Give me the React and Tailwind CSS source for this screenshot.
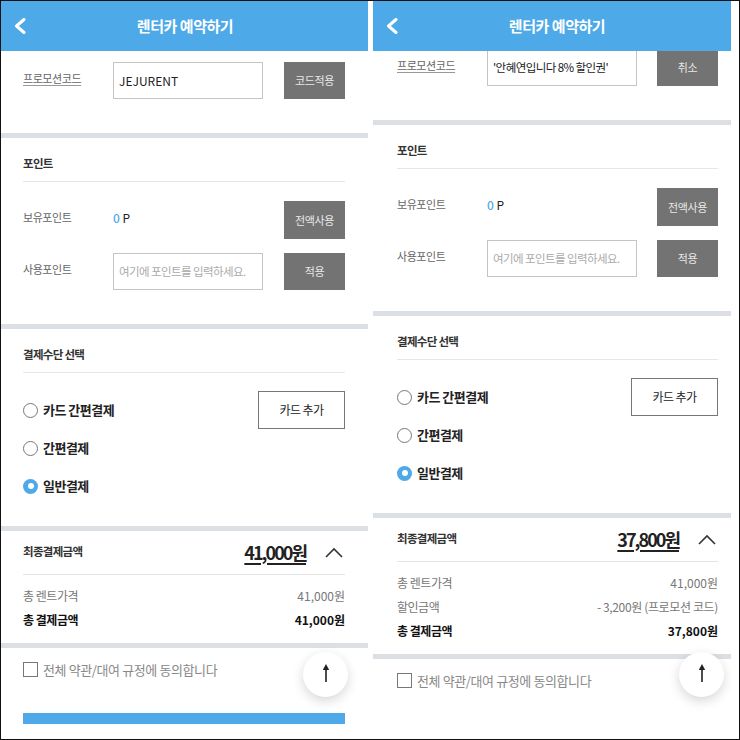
import React from "react";

function BackIcon() {
  return (
    <svg width="12" height="16" viewBox="0 0 12 16" className="ml-[13px] shrink-0">
      <polyline points="10,1.5 2.5,8 10,14.5" fill="none" stroke="white" strokeWidth="3" strokeLinecap="round" strokeLinejoin="round" />
    </svg>
  );
}

function Header() {
  return (
    <div className="h-[50px] w-[367px] shrink-0 bg-[#4DA9E7] flex items-center">
      <BackIcon />
      <div className="flex-1 text-center text-[15px] font-bold tracking-[-0.03em] text-white">렌터카 예약하기</div>
      <div className="w-[24px] shrink-0" />
    </div>
  );
}

function Band() {
  return <div className="h-[5px] bg-[#dcdfe3]" />;
}

function GreyBtn({ children }) {
  return (
    <div className="w-[61px] h-full shrink-0 bg-[#737373] flex items-center justify-center text-[11px] tracking-[-0.03em] text-[#e8e8e8]">
      {children}
    </div>
  );
}

function Radio({ checked, label }) {
  return (
    <div className="flex items-center gap-[5px]">
      {checked ? (
        <div className="w-[15px] h-[15px] rounded-full bg-[#4DA9E7] flex items-center justify-center">
          <div className="w-[6px] h-[6px] rounded-full bg-white" />
        </div>
      ) : (
        <div className="w-[15px] h-[15px] rounded-full border-[1.5px] border-[#777]" />
      )}
      <span className="text-[13px] font-semibold tracking-[-0.04em] text-[#222]">{label}</span>
    </div>
  );
}

function Content({ right }) {
  const pad = right ? "pl-[24px] pr-[22px]" : "pl-[22px] pr-[23px]";
  const total = right ? "37,800원" : "41,000원";
  return (
    <div className="flex flex-col">
      {/* promo */}
      <div className={"pt-[11px] pb-[34px] " + pad}>
        <div className="flex items-center h-[37px]">
          <div className="w-[90px] shrink-0 pb-[5px] text-[11px] tracking-[-0.04em] text-[#666] underline underline-offset-2 decoration-[#999]">프로모션코드</div>
          <div className="w-[150px] h-full shrink-0 border border-[#c4c4c4] flex items-center px-[5px] text-[12px] text-[#222]">
            {right ? <span className="text-[11.5px] tracking-[-0.05em]">'안혜연입니다 8% 할인권'</span> : "JEJURENT"}
          </div>
          <div className="flex-1" />
          <GreyBtn>{right ? "취소" : "코드적용"}</GreyBtn>
        </div>
      </div>
      <Band />
      {/* points */}
      <div className={"pt-[18px] pb-[34px] " + pad}>
        <div className="h-[16px] flex items-center text-[11.5px] font-bold tracking-[-0.06em] text-[#333]">포인트</div>
        <div className="mt-[9px] h-px bg-[#e6e6e6]" />
        <div className="mt-[19px] flex items-center h-[38px]">
          <div className="w-[90px] shrink-0 pb-[5px] text-[11px] tracking-[-0.04em] text-[#666]">보유포인트</div>
          <div className="pb-[5px] text-[12px] text-[#222]">
            <span className="text-[#4DA9E7] font-medium">0</span> P
          </div>
          <div className="flex-1" />
          <GreyBtn>전액사용</GreyBtn>
        </div>
        <div className="mt-[14px] flex items-center h-[37px]">
          <div className="w-[90px] shrink-0 pb-[5px] text-[11px] tracking-[-0.04em] text-[#666]">사용포인트</div>
          <div className="w-[150px] h-full shrink-0 border border-[#c4c4c4] flex items-center px-[5px] text-[11.5px] tracking-[-0.05em] text-[#aaa]">
            여기에 포인트를 입력하세요.
          </div>
          <div className="flex-1" />
          <GreyBtn>적용</GreyBtn>
        </div>
      </div>
      <Band />
      {/* payment */}
      <div className={"pt-[18px] pb-[21px] " + pad}>
        <div className="h-[16px] flex items-center text-[11.5px] font-bold tracking-[-0.06em] text-[#333]">결제수단 선택</div>
        <div className="mt-[9px] h-px bg-[#e6e6e6]" />
        <div className="mt-[18px] flex items-center h-[38px]">
          <Radio label="카드 간편결제" />
          <div className="flex-1" />
          <div className="w-[87px] h-full border border-[#777] flex items-center justify-center text-[12px] tracking-[-0.05em] text-[#222]">카드 추가</div>
        </div>
        <div className="flex items-center h-[38px]">
          <Radio label="간편결제" />
        </div>
        <div className="flex items-center h-[38px]">
          <Radio checked label="일반결제" />
        </div>
      </div>
      <Band />
      {/* summary */}
      <div className={"pt-[9px] pb-[11px] " + pad}>
        <div className="flex items-center h-[24px]">
          <span className="text-[11.5px] font-bold tracking-[-0.06em] text-[#333]">최종결제금액</span>
          <span className="ml-auto text-[18px] font-bold tracking-[-0.11em] text-[#222] underline decoration-[1.5px] underline-offset-[3px]">{total}</span>
          <svg className="ml-[19px] mr-[2px] shrink-0" width="18" height="11" viewBox="0 0 18 11">
            <polyline points="1,10 9,2 17,10" fill="none" stroke="#333" strokeWidth="1.6" />
          </svg>
        </div>
        <div className="mt-[10px] h-px bg-[#e4e4e4]" />
        <div className="mt-[9px] flex items-center justify-between h-[24px] text-[12px] text-[#777]">
          <span className="tracking-[-0.04em]">총 렌트가격</span>
          <span>41,000원</span>
        </div>
        {right && (
          <div className="flex items-center justify-between h-[24px] text-[12px] text-[#777]">
            <span className="tracking-[-0.04em]">할인금액</span>
            <span className="tracking-[-0.03em]">- 3,200원 (프로모션 코드)</span>
          </div>
        )}
        <div className="flex items-center justify-between h-[24px] text-[12px] font-bold text-[#111]">
          <span className="tracking-[-0.04em]">총 결제금액</span>
          <span>{total}</span>
        </div>
      </div>
      <Band />
      {/* agreement */}
      <div className={"pt-[14px] " + pad}>
        <div className="flex items-center gap-[5px] h-[15px]">
          <div className="w-[15px] h-[15px] shrink-0 border-[1.5px] border-[#777]" />
          <span className="text-[13px] tracking-[-0.03em] text-[#888]">전체 약관/대여 규정에 동의합니다</span>
        </div>
        {!right && <div className="mt-[36px] h-[11px] bg-[#4DA9E7]" />}
      </div>
    </div>
  );
}

function TopButton({ right }) {
  return (
    <div
      className={
        "absolute top-[651px] w-[45px] h-[45px] rounded-full bg-white shadow-[0_4px_12px_rgba(0,0,0,0.16)] flex items-center justify-center " +
        (right ? "left-[306px]" : "left-[302px]")
      }
    >
      <svg width="10" height="18" viewBox="0 0 10 18" className="-mt-[4px]">
        <polygon points="5,0 8.2,6 1.8,6" fill="#222" />
        <rect x="4.2" y="5" width="1.6" height="13" fill="#222" />
      </svg>
    </div>
  );
}

function Panel({ right }) {
  return (
    <div className={"relative h-full overflow-hidden shrink-0 flex flex-col " + (right ? "w-[358px]" : "w-[367px]")}>
      <Header />
      <div className="flex-1 overflow-hidden w-[367px]">
        <div className={right ? "-mt-[13px]" : ""}>
          <Content right={right} />
        </div>
      </div>
      <TopButton right={right} />
    </div>
  );
}

export default function App() {
  return (
    <div className="w-[740px] h-[740px] border border-[#111] bg-white flex font-['Noto_Sans_CJK_KR','Noto_Sans',sans-serif]">
      <Panel />
      <div className="w-[5px] shrink-0" />
      <Panel right />
      <div className="flex-1" />
    </div>
  );
}
